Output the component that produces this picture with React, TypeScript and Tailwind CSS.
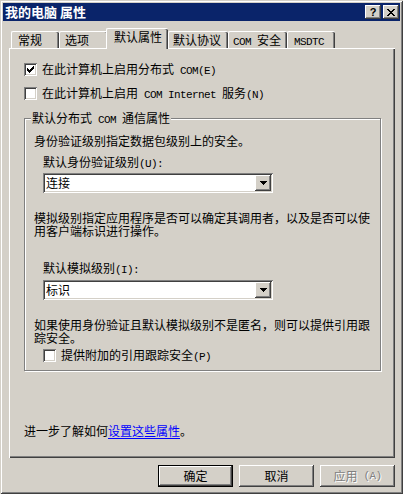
import type { ReactNode } from "react";

// classic win32 bevels
const RAISED =
  "shadow-[inset_-1px_-1px_#404040,inset_1px_1px_#ffffff,inset_-2px_-2px_#808080]";
const SUNKEN =
  "shadow-[inset_1px_1px_#808080,inset_-1px_-1px_#ffffff,inset_2px_2px_#404040,inset_-2px_-2px_#d4d0c8]";

// half-width latin text, 6px per glyph like the system font
function A({ children }: { children: ReactNode }) {
  return (
    <span className="font-['Liberation_Mono',monospace] text-[11px] tracking-[-0.6px] whitespace-pre">
      {children}
    </span>
  );
}

function Pixels({ w, h, px }: { w: number; h: number; px: number[][] }) {
  return (
    <svg width={w} height={h} shapeRendering="crispEdges">
      {px.map(([x, y]) => (
        <rect key={`${x}-${y}`} x={x} y={y} width="1" height="1" fill="#000" />
      ))}
    </svg>
  );
}

const CHECK = [
  [6, 0], [5, 1], [6, 1], [0, 2], [4, 2], [5, 2], [6, 2],
  [0, 3], [1, 3], [3, 3], [4, 3], [5, 3],
  [0, 4], [1, 4], [2, 4], [3, 4], [4, 4],
  [1, 5], [2, 5], [3, 5], [2, 6],
];

const ARROW = [
  [0, 0], [1, 0], [2, 0], [3, 0], [4, 0], [5, 0], [6, 0],
  [1, 1], [2, 1], [3, 1], [4, 1], [5, 1],
  [2, 2], [3, 2], [4, 2], [3, 3],
];

const CLOSE = [
  [0, 0], [1, 0], [6, 0], [7, 0],
  [1, 1], [2, 1], [5, 1], [6, 1],
  [2, 2], [3, 2], [4, 2], [5, 2],
  [3, 3], [4, 3],
  [2, 4], [3, 4], [4, 4], [5, 4],
  [1, 5], [2, 5], [5, 5], [6, 5],
  [0, 6], [1, 6], [6, 6], [7, 6],
];

function CheckBox({ checked }: { checked?: boolean }) {
  return (
    <div
      className={`w-[13px] h-[13px] shrink-0 bg-white flex items-center justify-center ${SUNKEN}`}
    >
      {checked && <Pixels w={7} h={7} px={CHECK} />}
    </div>
  );
}

function Select({ value }: { value: string }) {
  return (
    <div
      className={`w-[230px] h-[20px] bg-white flex items-center justify-between pl-[3px] pr-[2px] ${SUNKEN}`}
    >
      <span>{value}</span>
      <div
        className={`w-[16px] h-[16px] bg-[#d4d0c8] flex items-center justify-center ${RAISED}`}
      >
        <Pixels w={7} h={4} px={ARROW} />
      </div>
    </div>
  );
}

function Btn({
  children,
  isDefault,
  disabled,
}: {
  children: ReactNode;
  isDefault?: boolean;
  disabled?: boolean;
}) {
  return (
    <div
      className={`w-[75px] h-[22px] flex items-center justify-center bg-[#d4d0c8] ${RAISED} ${
        isDefault ? "border border-black" : ""
      } ${disabled ? "text-[#808080] text-shadow-[1px_1px_0_#ffffff]" : ""}`}
    >
      {children}
    </div>
  );
}

const tabs: { label: ReactNode; w: string; pl: string }[] = [
  { label: "常规", w: "w-[48px]", pl: "pl-[6px]" },
  { label: "选项", w: "w-[49px]", pl: "pl-[5px]" },
  { label: "默认属性", w: "w-[62px]", pl: "pl-[7px]" },
  { label: "默认协议", w: "w-[60px]", pl: "pl-[4px]" },
  { label: <><A>COM </A>安全</>, w: "w-[59px]", pl: "pl-[4px]" },
  { label: <A>MSDTC</A>, w: "w-[48px]", pl: "pl-[6px]" },
];
const ACTIVE = 2;

export default function App() {
  return (
    <div
      className="w-[403px] h-[494px] p-[3px] bg-[#d4d0c8] text-black text-[12px] leading-[12px] font-['Noto_Sans_CJK_SC',sans-serif] shadow-[inset_1px_1px_#d4d0c8,inset_-1px_-1px_#404040,inset_2px_2px_#ffffff,inset_-2px_-2px_#808080] flex flex-col"
    >
      {/* title bar */}
      <div className="h-[18px] bg-[#0a246a] flex items-center justify-between pl-[2px] pr-[1px]">
        <span className="text-white font-bold text-[13px]">我的电脑 属性</span>
        <div className="flex gap-[2px]">
          <div
            className={`w-[16px] h-[14px] bg-[#d4d0c8] flex items-center justify-center font-['Liberation_Sans',sans-serif] font-bold text-[11px] leading-[11px] ${RAISED}`}
          >
            ?
          </div>
          <div
            className={`w-[16px] h-[14px] bg-[#d4d0c8] flex items-center justify-center ${RAISED}`}
          >
            <Pixels w={8} h={7} px={CLOSE} />
          </div>
        </div>
      </div>

      {/* tabs */}
      <div className="mt-[7px] ml-[8px] h-[20px] flex items-end">
        {tabs.map((t, i) => {
          const active = i === ACTIVE;
          return (
            <div
              key={i}
              className={`${t.w} ${t.pl} pt-[2px] bg-[#d4d0c8] border-t border-l border-white rounded-tl-[2px] rounded-tr-[2px] shadow-[inset_-1px_0_#404040,inset_-2px_0_#808080] whitespace-nowrap ${
                active
                  ? "h-[21px] -ml-[2px] -mb-px relative z-10"
                  : "h-[17px]"
              }`}
            >
              {t.label}
            </div>
          );
        })}
      </div>

      {/* tab panel */}
      <div className="ml-[6px] w-[386px] h-[410px] bg-[#d4d0c8] pt-[15px] pl-[15px] shadow-[inset_1px_1px_#ffffff,inset_-1px_-1px_#404040,inset_-2px_-2px_#808080] flex flex-col">
        <div className="h-[13px] flex items-center gap-[5px]">
          <CheckBox checked />
          <span>
            在此计算机上启用分布式<A> COM(E)</A>
          </span>
        </div>
        <div className="mt-[11px] h-[13px] flex items-center gap-[5px]">
          <CheckBox />
          <span>
            在此计算机上启用<A> COM Internet </A>服务<A>(N)</A>
          </span>
        </div>

        {/* group box */}
        <div className="mt-[18px] w-[357px] relative border border-[#808080] shadow-[1px_1px_0_#ffffff,inset_1px_1px_0_#ffffff] pt-[16px] pl-[9px] pb-[8px] flex flex-col">
          <span className="absolute left-[6px] -top-[7px] px-[1px] bg-[#d4d0c8]">
            默认分布式<A> COM </A>通信属性
          </span>
          <p>身份验证级别指定数据包级别上的安全。</p>
          <p className="mt-[9px] ml-[9px]">
            默认身份验证级别<A>(U):</A>
          </p>
          <div className="mt-[3px] ml-[9px]">
            <Select value="连接" />
          </div>
          <p className="mt-[18px] leading-[13px]">
            模拟级别指定应用程序是否可以确定其调用者，以及是否可以使
            <br />
            用客户端标识进行操作。
          </p>
          <p className="mt-[25px] ml-[9px]">
            默认模拟级别<A>(I):</A>
          </p>
          <div className="mt-[4px] ml-[9px]">
            <Select value="标识" />
          </div>
          <p className="mt-[18px] leading-[13px]">
            如果使用身份验证且默认模拟级别不是匿名，则可以提供引用跟
            <br />
            踪安全。
          </p>
          <div className="mt-[5px] ml-[9px] h-[13px] flex items-center gap-[5px]">
            <CheckBox />
            <span>
              提供附加的引用跟踪安全<A>(P)</A>
            </span>
          </div>
        </div>

        <p className="mt-[54px]">
          进一步了解如何
          <a className="text-[#0000ff] underline underline-offset-2">设置这些属性</a>。
        </p>
      </div>

      {/* buttons */}
      <div className="mt-[7px] pr-[5px] flex justify-end gap-[6px]">
        <Btn isDefault>确定</Btn>
        <Btn>取消</Btn>
        <Btn disabled>
          应用<A> (A)</A>
        </Btn>
      </div>
    </div>
  );
}
